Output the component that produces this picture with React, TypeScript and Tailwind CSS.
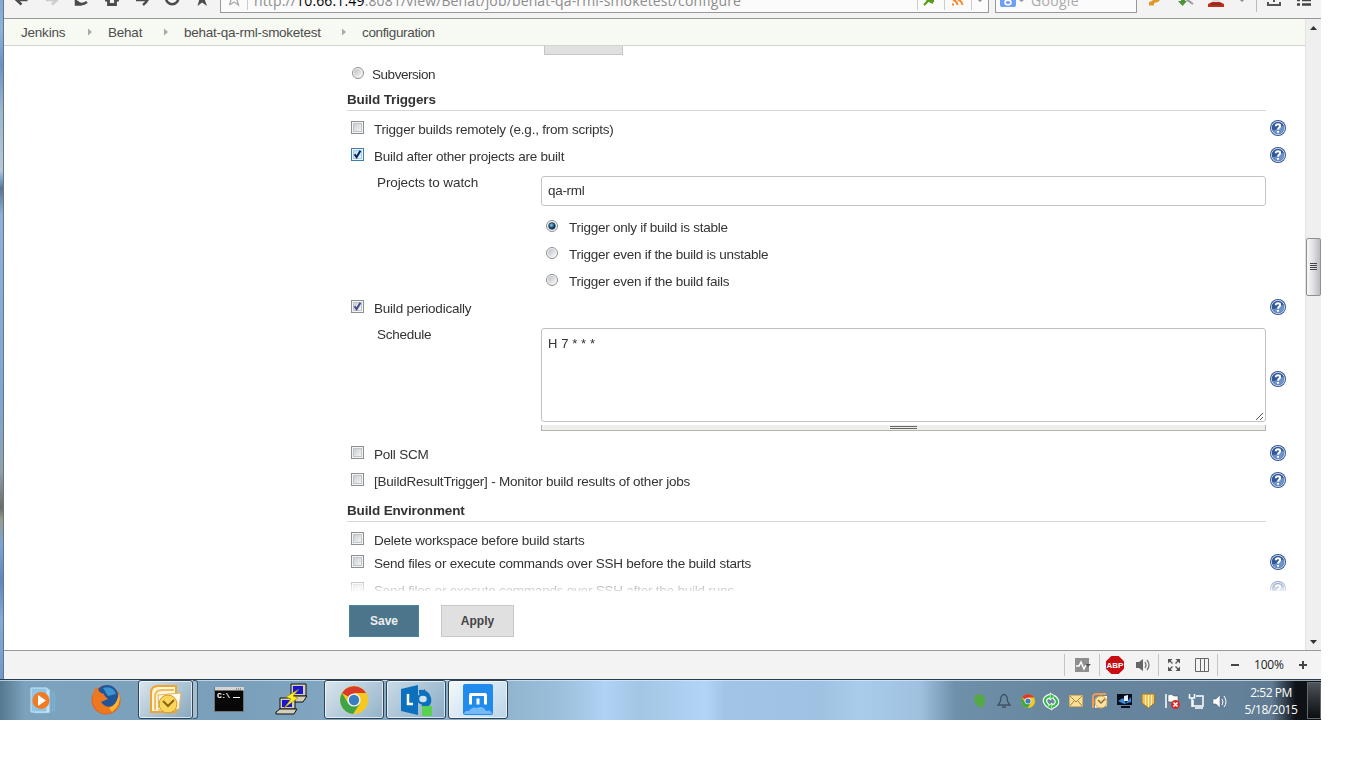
import React from "react";

function Help({ className = "" }: { className?: string }) {
  return (
    <svg viewBox="0 0 16 16" className={`h-4 w-4 shrink-0 ${className}`}>
      <circle cx="8" cy="8" r="8" fill="#2f5795" />
      <circle cx="8" cy="8" r="7" fill="#e8eef7" />
      <circle cx="8" cy="8" r="6.2" fill="#31599a" />
      <path d="M2.500 10.500Q8 9.500 13.500 5.500A6.200 6.200 0 0 1 4 12.700Z" fill="#6f93c8" />
      <path d="M5.800 6.200C5.800 3.400 10.300 3.500 10.200 6.100C10.100 7.600 8.100 7.600 8 9.600M8 10.900v1.900" stroke="#fff" strokeWidth="2" fill="none" />
    </svg>
  );
}

function Box({ checked, blue }: { checked?: boolean; blue?: boolean }) {
  const edge = blue ? "#3c7fb1" : "#8e8f8f";
  return (
    <svg viewBox="0 0 13 13" className="mt-[6px] h-[13px] w-[13px] shrink-0">
      <defs>
        <linearGradient id={blue ? "cbB" : "cbG"} x1="0" y1="0" x2="1" y2="1">
          <stop offset="0" stopColor={blue ? "#b3dcf4" : "#c6cad1"} />
          <stop offset="1" stopColor="#f8f8f8" />
        </linearGradient>
      </defs>
      <rect x=".5" y=".5" width="12" height="12" fill="#f4f4f4" stroke={edge} />
      <rect x="2.5" y="2.5" width="8" height="8" fill={`url(#${blue ? "cbB" : "cbG"})`} stroke={blue ? "#a0cfea" : "#c0c5ca"} />
      {checked && <path d="M3.600 6.200L5.600 9.200L9.400 2.800" stroke={blue ? "#0b1f66" : "#3f4c8e"} strokeWidth="2" fill="none" />}
    </svg>
  );
}

function Radio({ on }: { on?: boolean }) {
  return (
    <svg viewBox="0 0 12 12" className="mt-[7px] h-3 w-3 shrink-0">
      <defs>
        <linearGradient id="rd" x1="0" y1="0" x2="1" y2="1">
          <stop offset="0" stopColor="#b9bec6" />
          <stop offset="1" stopColor="#fafafa" />
        </linearGradient>
        <radialGradient id="ro" cx=".4" cy=".35">
          <stop offset="0" stopColor="#7fd6f5" />
          <stop offset="1" stopColor="#12375c" />
        </radialGradient>
      </defs>
      <circle cx="6" cy="6" r="5.500" fill="#f4f4f4" stroke="#8e8f8f" />
      <circle cx="6" cy="6" r="3.900" fill="url(#rd)" />
      {on && <circle cx="6" cy="6" r="3.300" fill="url(#ro)" stroke="#17344f" strokeWidth=".7" />}
    </svg>
  );
}

function CheckRow({ children, h = "h-[27px]", checked, blue, help }: { children: React.ReactNode; h?: string; checked?: boolean; blue?: boolean; help?: boolean }) {
  return (
    <div className={`flex shrink-0 items-start ${h}`}>
      <div className="flex w-[923px] items-start gap-[10px] pl-1">
        <Box checked={checked} blue={blue} />
        <span className="mt-[7px] leading-4">{children}</span>
      </div>
      {help && <Help className="mt-[5px]" />}
    </div>
  );
}

function RadioRow({ children, on }: { children: React.ReactNode; on?: boolean }) {
  return (
    <div className="flex h-[27px] shrink-0 items-start gap-[11px] pl-[199px] tracking-[-0.26px]">
      <Radio on={on} />
      <span className="mt-[7px] leading-4">{children}</span>
    </div>
  );
}

function Heading({ children, h }: { children: React.ReactNode; h: string }) {
  return <h2 className={`flex w-[919px] shrink-0 items-start border-b border-[#d8d8d8] font-bold leading-4 tracking-[-0.14px] ${h}`}>{children}</h2>;
}

function Arrow({ className }: { className: string }) {
  return (
    <svg viewBox="0 0 4 8" className={`h-2 w-1 ${className}`}>
      <path d="M0 .5L4 4L0 7.500Z" fill="#aaa" />
    </svg>
  );
}

const NAV = [
  <path key="0" d="M20.500 0H10M14.500 -6L9 -.5L14.500 4.500" />,
  <path key="1" d="M9 0H20M15 -6L20.500 -.5L15 4.500" stroke="#ccc" />,
  <path key="2" d="M9 -2V4.500H14M10 1.500Q14 6.500 20 2" />,
  <path key="3" d="M8 0H11.500V4.500H18.500V0H22" strokeWidth="2.800" />,
  <path key="4" d="M9 0H19M16 5Q20 2 21.500 -2" />,
  <path key="5" d="M9 -2A6.200 6.200 0 1 0 21.400 -2" />,
  <path key="6" d="M10.500 6L12.500 -1H17.500L20 6L15 2.500Z" fill="#4b4b4b" stroke="none" />,
];

function Toolbar() {
  return (
    <div className="flex h-[19px] shrink-0 items-start overflow-hidden border-b border-[#999] bg-[#f3f3f3]">
      <div className="flex w-[216px] shrink-0 pl-[3px]">
        {NAV.map((p, i) => (
          <svg key={i} viewBox="0 0 30 18" className="h-[18px] w-[30px] shrink-0" fill="none" stroke="#4b4b4b" strokeWidth="2.500">
            {p}
          </svg>
        ))}
      </div>
      <div className="flex h-[13px] w-[769px] shrink-0 items-start border border-t-0 border-[#999] bg-[#fbfbfb]">
        <svg viewBox="0 0 26 12" className="h-3 w-[26px] shrink-0" fill="none" stroke="#aaa" strokeWidth="1.300">
          <path d="M8.500 5L10 0L8 -3M8.500 5L13 2L17.500 5L16 0L18 -3" />
        </svg>
        <div className="h-[10px] w-px shrink-0 bg-[#ccc]" />
        <div className="-mt-[10px] w-[669px] shrink-0 whitespace-nowrap pl-[6px] font-['Open_Sans',sans-serif] text-[14px] leading-[22px] tracking-[0.145px] text-[#8c8c8c]">
          http://<span className="text-black">10.66.1.49</span>:8081/view/Behat/job/behat-qa-rml-smoketest/configure
        </div>
        <svg viewBox="0 0 72 12" className="h-3 w-[72px] shrink-0">
          <path d="M.5 0V10M27.500 0V10M54.500 0V10" stroke="#ccc" />
          <path d="M7 5L12 0M9 -1L16 3M11 1H17" stroke="#5a9a1c" strokeWidth="2.200" fill="none" />
          <path d="M35 4.500H37M36 0Q40 1 40.500 5M40 -1Q45 1 45.500 5" stroke="#f5862b" strokeWidth="2" fill="none" />
          <path d="M61 0H65L63 2Z" fill="#888" />
        </svg>
      </div>
      <div className="ml-[6px] flex h-[13px] w-[142px] shrink-0 items-start border border-t-0 border-[#999] bg-[#fbfbfb]">
        <svg viewBox="0 0 35 12" className="h-3 w-[35px] shrink-0">
          <path d="M4 -2H20V5Q20 7 18 7H6Q4 7 4 5Z" fill="#6fa0f6" />
          <ellipse cx="12" cy="2.500" rx="3" ry="2.300" fill="none" stroke="#fff" strokeWidth="1.600" />
          <path d="M23 0H28L25.500 2Z" fill="#999" />
        </svg>
        <span className="-mt-[10px] font-['Open_Sans',sans-serif] text-[14px] leading-[22px] tracking-[0.3px] text-[#aaa]">Google</span>
      </div>
      <svg viewBox="1137 0 184 18" className="h-[18px] w-[184px] shrink-0">
        <path d="M1149 5.500V2L1152 1L1155 -2H1162L1158 2L1154 3V5.500Z" fill="#dd9a2b" />
        <path d="M1178 1H1181V-3H1185V1H1187L1182.500 6Z" fill="#4b9336" />
        <path d="M1186 -1L1193 4" fill="none" stroke="#999" strokeWidth="2" />
        <path d="M1208 7V4L1212 2H1220L1224 4V7Z" fill="#c42c1b" />
        <path d="M1211 3.500H1221V5H1211Z" fill="#693529" />
        <path d="M1212 0H1220V2H1212Z" fill="#ddd" />
        <path d="M1240 0H1244L1242 2Z" fill="#888" />
        <path d="M1256.500 0V12" stroke="#bbb" />
        <path d="M1268 2V5H1280V2M1274 -2V2" fill="none" stroke="#555" strokeWidth="2" />
        <path d="M1297 0H1300M1302 0H1311M1297 4.500H1300M1302 4.500H1311" stroke="#444" strokeWidth="2.500" />
      </svg>
    </div>
  );
}

function Scrollbar() {
  return (
    <div className="flex w-4 shrink-0 flex-col items-center border-l border-[#e3e3e3] bg-[#efefef]">
      <svg viewBox="0 0 15 219" className="h-[219px] w-[15px] shrink-0">
        <path d="M4 11L7.500 7L11 11Z" fill="#333" />
      </svg>
      <div className="flex h-[58px] w-[15px] shrink-0 items-center justify-center rounded-[2px] border border-[#8f8f8f] bg-linear-to-r from-[#f8f8f8] via-[#dedfe1] to-[#b9bbc0]">
        <div className="mb-px flex w-[7px] flex-col gap-px">
          <i className="h-px bg-[#444]" />
          <i className="h-px bg-[#444]" />
          <i className="h-px bg-[#444]" />
          <i className="h-px bg-[#444]" />
        </div>
      </div>
      <svg viewBox="0 0 15 10" className="mt-auto h-[10px] w-[15px] shrink-0">
        <path d="M4 0L7.500 4L11 0Z" fill="#333" />
      </svg>
    </div>
  );
}

function Form() {
  return (
    <div className="flex h-[605px] flex-col overflow-hidden">
      <div className="flex h-[545px] shrink-0 flex-col overflow-hidden pl-[343px] [mask-image:linear-gradient(#000_96%,rgba(0,0,0,0.15))]">
        <div className="ml-[197px] h-[9px] w-[79px] shrink-0 border border-t-0 border-[#c6c6c6] bg-[#e0e0e0]" />
        <div className="mt-[5px] flex h-[27px] shrink-0 items-start gap-2 pl-[5px] tracking-[-0.45px]">
          <Radio />
          <span className="mt-[7px] leading-4">Subversion</span>
        </div>
        <Heading h="h-6 pt-[5px]">Build Triggers</Heading>
        <div className="h-1 shrink-0" />
        <CheckRow help>Trigger builds remotely (e.g., from scripts)</CheckRow>
        <CheckRow checked blue help>Build after other projects are built</CheckRow>
        <div className="flex h-[44px] shrink-0 pt-[7px]">
          <span className="-mt-px w-[194px] pl-[30px] leading-4 tracking-[-0.1px]">Projects to watch</span>
          <div className="flex h-[30px] w-[725px] items-center rounded-[3px] border border-[#c4c4c4] pl-[6px] pt-px tracking-[-0.3px]">qa-rml</div>
        </div>
        <RadioRow on>Trigger only if build is stable</RadioRow>
        <RadioRow>Trigger even if the build is unstable</RadioRow>
        <RadioRow>Trigger even if the build fails</RadioRow>
        <CheckRow checked help>Build periodically</CheckRow>
        <div className="flex h-[119px] shrink-0 pt-[7px]">
          <span className="-mt-px w-[194px] pl-[30px] leading-4 tracking-[-0.25px]">Schedule</span>
          <div className="flex w-[725px] flex-col">
            <div className="flex h-[94px] items-end justify-between rounded-[3px] border border-[#c0c0c0]">
              <span className="self-start pl-[6px] pt-[7px] text-[13px] leading-4 tracking-[0.1px]">H 7 * * *</span>
              <svg viewBox="0 0 9 9" className="h-[9px] w-[9px]">
                <path d="M0 8L7 1M4 8L7 5" stroke="#555" />
              </svg>
            </div>
            <div className="mt-[3px] flex h-[6px] items-center justify-center border border-t-0 border-[#b5b5ac] bg-[#eee]">
              <div className="h-[3px] w-[27px] border-y border-[#666]" />
            </div>
          </div>
          <Help className="ml-1 mt-[43px]" />
        </div>
        <CheckRow help>Poll SCM</CheckRow>
        <CheckRow help>[BuildResultTrigger] - Monitor build results of other jobs</CheckRow>
        <Heading h="h-7 pt-[9px]">Build Environment</Heading>
        <div className="h-1 shrink-0" />
        <CheckRow h="h-[23px]">Delete workspace before build starts</CheckRow>
        <CheckRow help>Send files or execute commands over SSH before the build starts</CheckRow>
        <CheckRow help>Send files or execute commands over SSH after the build runs</CheckRow>
      </div>
      <div className="flex h-[60px] shrink-0 gap-[22px] pl-[345px] pt-[14px] text-[12px] font-bold tracking-normal">
        <button className="h-8 w-[70px] border border-[#4c84a0] bg-[#4b758b] text-[#eee]">Save</button>
        <button className="h-8 w-[73px] border border-[#c8c8c8] bg-[#e0e0e0] text-[#444]">Apply</button>
      </div>
    </div>
  );
}

function StatusBar() {
  return (
    <div className="flex h-[29px] shrink-0 justify-end border-t border-[#999] bg-[#f3f3f3]">
      <svg viewBox="1060 651 194 28" className="h-7 w-[194px] shrink-0" fill="none">
        <path d="M1064.500 654V676M1099.500 654V676M1158.500 654V676M1217.500 654V676" stroke="#c6c6c6" />
        <path d="M1075 658H1089V672H1075Z" fill="#8f8f8f" />
        <path d="M1076 666H1079L1081 662L1084 669L1086 665H1087" stroke="#fff" strokeWidth="1.500" />
        <path d="M1085 664H1091L1088 667Z" fill="#555" />
        <path d="M1111.300 656H1118.700L1124 661.300V668.700L1118.700 674H1111.300L1106 668.700V661.300Z" fill="#c70d12" />
        <text x="1115" y="668" textAnchor="middle" fill="#fff" fontSize="8" fontWeight="bold" fontFamily="Liberation Sans" letterSpacing="0">ABP</text>
        <path d="M1136 662H1139L1143 659V671L1139 668H1136Z" fill="#666" />
        <path d="M1145 662Q1147 665 1145 668M1147 660Q1151 665 1147 670" stroke="#777" strokeWidth="1.300" />
        <path d="M1168 659H1172.500L1168 663.500ZM1180 659H1175.500L1180 663.500ZM1168 671H1172.500L1168 666.500ZM1180 671H1175.500L1180 666.500Z" fill="#555" />
        <path d="M1169 660L1172.500 663.500M1179 660L1175.500 663.500M1169 670L1172.500 666.500M1179 670L1175.500 666.500" stroke="#555" strokeWidth="1.300" />
        <path d="M1195.500 658.500H1208.500V671.500H1195.500ZM1200.500 658V672M1204.500 658V672" stroke="#666" />
        <path d="M1231 665H1239" stroke="#444" strokeWidth="2" />
      </svg>
      <span className="w-[36px] whitespace-nowrap font-['Open_Sans',sans-serif] text-[12px] leading-7 tracking-[-0.2px] text-[#222]">100%</span>
      <svg viewBox="1290 651 31 28" className="h-7 w-[31px] shrink-0">
        <path d="M1299 665H1307M1303 661V669" stroke="#444" strokeWidth="2" />
      </svg>
    </div>
  );
}

function ChromeShape() {
  return (
    <>
      <circle cx="14" cy="14" r="14" fill="#f8c91c" />
      <path d="M14 14L2 7A14 14 0 0 1 26.100 7H14Z" fill="#d93a2b" />
      <path d="M2 7A14 14 0 0 0 13 28L20 17.500L14 20L8 17Z" fill="#3fa447" />
      <circle cx="14" cy="14" r="6.600" fill="#f4f4f4" />
      <circle cx="14" cy="14" r="5.200" fill="#397ec0" />
    </>
  );
}

const TASK = "flex h-[39px] shrink-0 items-center justify-center rounded-[3px] border border-[#2f4356] shadow-[inset_0_0_0_1px_rgba(255,255,255,0.65)]";

function Taskbar() {
  return (
    <div className="flex h-[41px] w-[1321px] shrink-0 items-stretch border-t border-[#2c3d52] bg-[linear-gradient(90deg,#54798f_0,#7ca3bd_25px,#7a9fba_240px,#8fb3cd_500px,#9cbfdb_560px,#b0d2f4_605px,#a3c6e4_640px,#b2d4f6_705px,#a2c4e5_725px,#9fc2e2_820px,#a9cceb_860px,#9fc1df_920px,#6f90aa_955px,#68879f_1050px,#64819a_1240px,#5f7a91_1272px,#0e1116_1296px)] shadow-[inset_0_1px_0_rgba(220,235,250,0.7)]">
      <div className="flex w-[138px] items-center">
        <svg viewBox="0 0 138 40" className="h-10 w-[138px]">
          <path d="M34 9H50V33H34Z" fill="#c7e1f1" stroke="#7db8dc" />
          <path d="M31 8H47V32H31Z" fill="#8fc5e4" stroke="#c7e6f7" />
          <path d="M52.500 11V32M54.500 13V31" stroke="#75b5da" />
          <circle cx="41" cy="20.500" r="8.500" fill="#f27a22" />
          <path d="M38 15L46 20.500L38 26Z" fill="#fff" />
          <circle cx="106" cy="20" r="14.500" fill="#e5651c" />
          <circle cx="107" cy="16" r="11" fill="#20559a" />
          <path d="M103 8Q113 5 116 14L108 16Z" fill="#3d94cf" />
          <path d="M95 8Q91 17 94 26Q101 37 112 32Q121 27 120 14Q116 25 111 27Q104 27 101 22L108 19Q104 16 104 14Q99 13 98 9Z" fill="#ee7820" />
          <path d="M112 32Q122 25 119 13Q117 26 109 28Z" fill="#f7b72d" />
        </svg>
      </div>
      <div className={`w-[55px] bg-[linear-gradient(135deg,#d9e6ee,#88a7bd)] ${TASK}`}>
        <svg viewBox="0 0 34 30" className="h-[30px] w-[34px]">
          <path d="M2 27V8Q2 1 9 1H27V27Z" fill="#fff5dc" stroke="#f3a42f" strokeWidth="2" />
          <path d="M6 25V12Q6 5 13 5H25" fill="none" stroke="#f2bd5e" strokeWidth="2" />
          <path d="M9 10L32 8L30 24L10 26Z" fill="#fffaf0" stroke="#e8b354" />
          <circle cx="19" cy="19" r="9" fill="#fbd65c" stroke="#d79a20" />
          <path d="M14 16L19 21L25 15" fill="none" stroke="#8c6414" strokeWidth="2" />
        </svg>
      </div>
      <div className="mr-[10px] h-[39px] w-[5px] rounded-r-[3px] border border-l-0 border-[#40576b] bg-[#a4bdcd]" />
      <div className="flex w-[116px] items-center">
        <svg viewBox="208 0 116 40" className="h-10 w-[116px]">
          <path d="M214.500 7.500H243.500V31.500H214.500Z" fill="#080808" stroke="#747474" />
          <path d="M215 7H244V10.500H215Z" fill="#d4d4d4" />
          <path d="M236 9H242" stroke="#555" strokeDasharray="1 1" />
          <text x="217" y="18" fill="#fff" fontSize="8" fontFamily="Liberation Mono" fontWeight="bold" letterSpacing="-.6">C:\</text>
          <path d="M233 17.500H240" stroke="#fff" />
          <g stroke="#111" fill="#d4d0b8">
            <path d="M291 4H306V16H291Z" /><path d="M288 20L292 16H307L303 22H288Z" />
            <path d="M280 18H295V29H280Z" /><path d="M276 32L280 29H297L294 34H276Z" />
          </g>
          <path d="M293 6H303V14H293ZM282 20H292V27H282Z" fill="#1a16cf" />
          <path d="M299 9L286 17L291 19L284 28L298 18L293 16Z" fill="#ffec1d" stroke="#8a800d" strokeWidth=".6" />
        </svg>
      </div>
      <div className={`mr-[2px] w-[60px] bg-[linear-gradient(135deg,#d9e6ee,#94b2c8)] ${TASK}`}>
        <svg viewBox="0 0 28 28" className="h-7 w-7">
          <ChromeShape />
        </svg>
      </div>
      <div className={`mr-[2px] w-[60px] bg-[linear-gradient(135deg,#c9dbe7,#8aacc5)] ${TASK}`}>
        <svg viewBox="0 0 32 32" className="h-8 w-8">
          <path d="M19 8Q27 7 29 14Q31 22 22 21" stroke="#0c71bd" strokeWidth="4" fill="none" />
          <ellipse cx="23" cy="15" rx="5" ry="4.500" fill="#cfe2ef" stroke="#0c71bd" strokeWidth="2.500" />
          <path d="M20 8L25 5V11Z" fill="#0c71bd" />
          <path d="M1 5L18 1V31L1 27Z" fill="#0c70bd" />
          <path d="M8 10V20H13" stroke="#fff" strokeWidth="2.500" fill="none" />
          <path d="M22 22H32V32H22Z" fill="#5bd153" />
        </svg>
      </div>
      <div className={`w-[60px] bg-[linear-gradient(135deg,#f2f8fc,#bbd5ea)] ${TASK}`}>
        <svg viewBox="0 0 30 31" className="h-[31px] w-[30px]">
          <rect width="30" height="31" rx="2" fill="#218bed" />
          <path d="M7.500 20.500V11Q7.500 10.500 8 10.500H22Q22.500 10.500 22.500 11V20.500M15 14.500V20.500" fill="none" stroke="#fff" strokeWidth="3" />
          <path d="M1 30Q2 26 6 27Q9 22 14 24Q20 21 23 27Q28 25 29 30Z" fill="#75b9f6" />
        </svg>
      </div>
      <div className="ml-auto flex shrink-0">
        <svg viewBox="970 680 265 40" className="h-10 w-[265px]" fill="none">
          <path d="M974 697Q976 694 981 694L985 697V704L981 708L975 704Z" fill="#55a845" />
          <path d="M998 705Q1001 702 1001 697Q1004 692 1007 697Q1007 702 1010 705ZM1002 707H1006" stroke="#3e5264" strokeWidth="1.300" />
          <g transform="translate(1021 694) scale(.5)">
            <ChromeShape />
          </g>
          <path d="M1048 706Q1041 699 1050 696M1054 697Q1061 703 1052 707" stroke="#fff" strokeWidth="4.500" />
          <path d="M1050 693L1055 696L1050 700ZM1052 703V710L1047 707Z" fill="#36bc46" stroke="#fff" />
          <path d="M1048 706Q1041 699 1050 696M1054 697Q1061 703 1052 707" stroke="#36bc46" strokeWidth="2.200" />
          <path d="M1069.500 695.500H1082.500V706.500H1069.500Z" fill="#f9e19a" stroke="#d8b15a" />
          <path d="M1070 696L1076 702L1082 696M1070 706L1074 701M1082 706L1078 701" stroke="#a88238" />
          <path d="M1093 708V697Q1093 694 1097 694H1106" stroke="#f39a51" strokeWidth="2" />
          <path d="M1095 708V699L1099 696H1107V706Z" fill="#fff1dc" />
          <circle cx="1101" cy="702" r="6" fill="#fbe1a2" stroke="#d6a64d" />
          <path d="M1098 700L1101 703L1105 699" stroke="#8d6b2d" strokeWidth="1.500" />
          <path d="M1117 694H1132V705H1117ZM1121 706H1130V708H1121Z" fill="#080d1c" />
          <path d="M1118 701L1123 698L1126 703L1131 697V702L1124 704Z" fill="#3b8bd9" /><path d="M1124 696L1128 695V701H1124Z" fill="#e5eff8" />
          <path d="M1142 694H1154.500V703L1148.500 708L1142 703Z" fill="#edc25a" stroke="#aa7a24" />
          <path d="M1145.500 695V705M1148.500 695V707M1151.500 695V705" stroke="#fff2b2" />
          <path d="M1166 694V708" stroke="#fff" strokeWidth="1.500" />
          <path d="M1168 695Q1171 693 1174 696H1178V703H1173Q1170 701 1168 702Z" fill="#fff" stroke="#344657" strokeWidth=".5" />
          <circle cx="1175.500" cy="704.500" r="4.500" fill="#d52c26" /><path d="M1173.500 702.500L1177.500 706.500M1177.500 702.500L1173.500 706.500" stroke="#fff" strokeWidth="1.500" />
          <path d="M1196 696H1203V706H1193V700M1195 708H1203" stroke="#fff" strokeWidth="1.500" />
          <path d="M1189.500 694V698H1194.500V694M1192 698V707" stroke="#fff" strokeWidth="1.500" />
          <path d="M1213 699H1216L1220 695V708L1216 704H1213Z" fill="#fff" stroke="#445b6d" strokeWidth=".5" />
          <path d="M1222 699Q1224 702 1222 705M1224 696Q1228 702 1224 707" stroke="#fff" />
        </svg>
        <div className="flex w-[72px] flex-col items-center pt-1 font-['Open_Sans',sans-serif] text-[12px] leading-[17px] tracking-[-0.45px] text-white">
          <span>2:52 PM</span>
          <span>5/18/2015</span>
        </div>
        <div className="mt-[2px] h-[37px] w-[14px] border border-[#626a70] bg-linear-to-b from-[#50555b] to-[#0b0d10]" />
      </div>
    </div>
  );
}

export default function App() {
  return (
    <div className="h-[768px] w-[1366px] overflow-hidden bg-white font-['Liberation_Sans',Arial,sans-serif] text-[13.5px] tracking-[-0.22px] text-[#333]">
      <div className="flex h-[679px] w-[1321px]">
        <div className="w-1 shrink-0 border-r border-[#5f7890] bg-[linear-gradient(#83a9d0,#8fb4dc_30px,#6b93c4_65px,#9fb6cc_110px,#b9c8d4_170px,#7d9fc8_180px,#5f738a_188px,#8fb2da_215px,#7fa6d2_400px,#94a2a8_470px,#6f6d62_508px,#9a9c8a_520px,#7fa5d3_545px,#5f86ba_580px,#86acd8_620px,#6f97c8)]" />
        <div className="flex w-[1317px] flex-col">
          <Toolbar />
          <div className="flex h-[631px] shrink-0">
            <div className="w-[1301px]">
              <nav className="flex h-[27px] items-center border-b border-[#d3d5cf] bg-[#f7faf2] pl-[17px] pt-[2px] text-[#4d4d4d]">
                <span className="w-[45px]">Jenkins</span>
                <Arrow className="mb-[2px] ml-[22px] mr-4" />
                <span className="w-[34px]">Behat</span>
                <Arrow className="mb-[2px] ml-[22px] mr-4" />
                <span className="w-[137px] whitespace-nowrap tracking-[-0.26px]">behat-qa-rml-smoketest</span>
                <Arrow className="mb-[2px] ml-[21px] mr-4" />
                <span className="tracking-[-0.35px]">configuration</span>
              </nav>
              <Form />
            </div>
            <Scrollbar />
          </div>
          <StatusBar />
        </div>
      </div>
      <Taskbar />
    </div>
  );
}
